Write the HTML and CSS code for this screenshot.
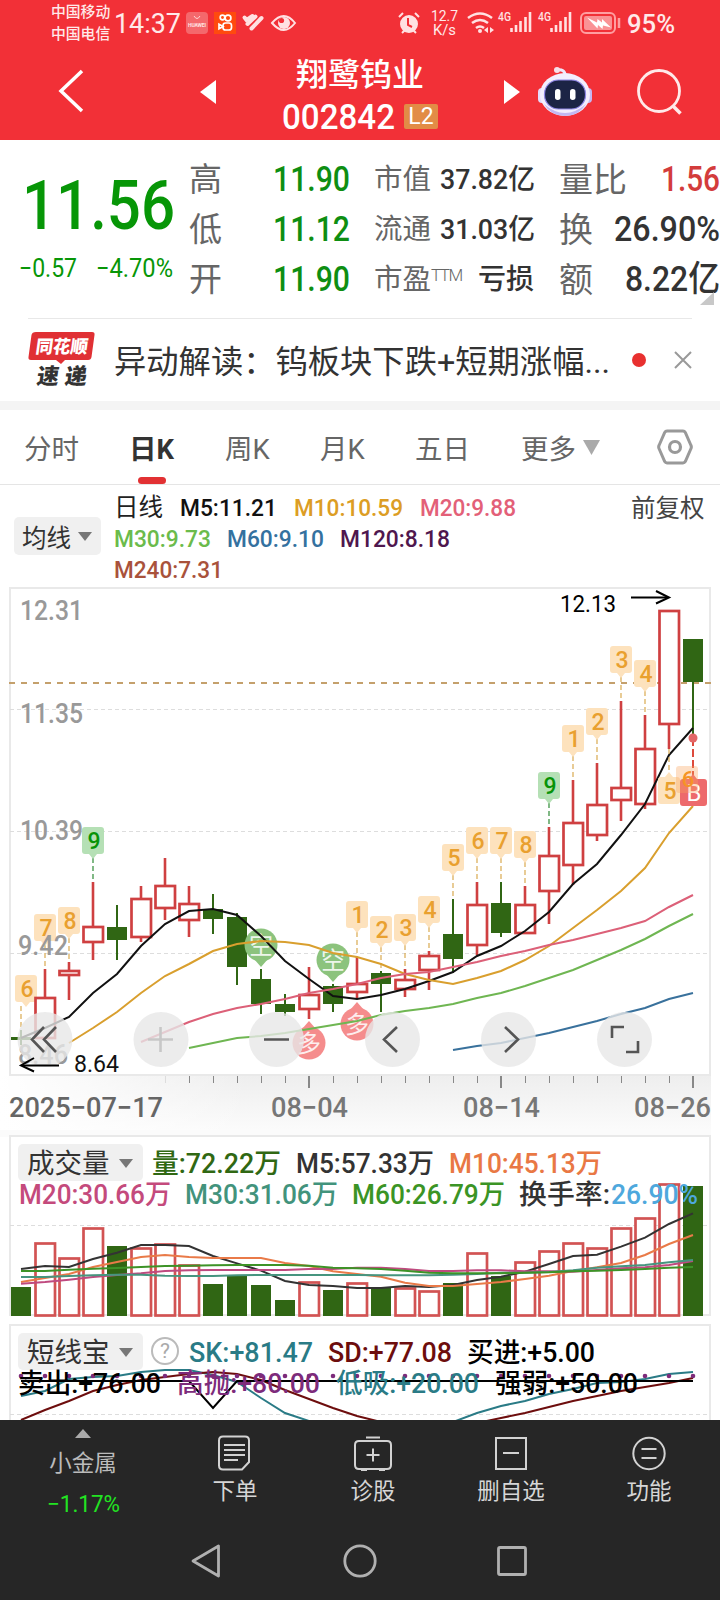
FILE: index.html
```html
<!DOCTYPE html>
<html lang="zh-CN">
<head>
<meta charset="utf-8">
<title>翔鹭钨业 002842</title>
<link rel="stylesheet" href="styles.css">
</head>
<body>
<div class="phone">
  <header class="top">
    <div class="status">
      <div class="carriers"><span>中国移动</span><span>中国电信</span></div>
      <span class="clock" data-w="67">14:37</span>
      <svg class="status-left" width="112" height="24" viewBox="186 11 112 24">
        <rect x="186" y="12" width="22" height="22" rx="4" fill="#f4686c"/>
        <path d="M194 16q3 5 6 0" fill="none" stroke="#ffd5d5"/>
        <text x="188" y="27" font-size="5" font-weight="700" fill="#ffe3e3" textLength="18">HUAWEI</text>
        <rect x="214" y="12" width="22" height="22" fill="#ff4a0e"/>
        <g fill="none" stroke="#fff" stroke-width="1.7"><circle cx="222.500" cy="17.500" r="2.300"/><circle cx="228" cy="18" r="2.900"/><rect x="223" y="23" width="8.500" height="7" rx="2.500"/><path d="M223 26.500l-4-2.200v4.400z"/></g>
        <g stroke="#ffe1e2" stroke-width="4" stroke-linecap="round"><path d="M244.500 17.500l2 2.500 6-4"/><path d="M247.500 24l8-7.500"/><path d="M251.500 28.500l10-10.500"/></g>
        <path d="M272 23q12-14 23 0q-11 14-23 0z" fill="none" stroke="#ffe1e2" stroke-width="2"/>
        <circle cx="284" cy="23" r="6" fill="#ffe1e2"/><circle cx="281.500" cy="20.500" r="2.600" fill="#f23037"/>
      </svg>
      <svg class="status-right" width="225" height="34" viewBox="396 6 225 34">
        <g stroke="#ffe1e2" stroke-width="2" fill="none"><circle cx="409" cy="24" r="8" fill="#ffe1e2"/><path d="M399 17l4-4M419 17l-4-4M402 33l3-3M416 33l-3-3"/><path d="M408 18v7l4 2" stroke="#f23037"/></g>
        <g fill="#ffe9e9" font-size="15"><text x="431" y="20.500" textLength="27" lengthAdjust="spacingAndGlyphs">12.7</text><text x="433" y="34.500" textLength="23" lengthAdjust="spacingAndGlyphs">K/s</text></g>
        <g stroke="#ffe1e2" stroke-width="2.500" fill="none"><path d="M468 18q12-9 24 0"/><path d="M472 23q8-6 16 0"/><path d="M476 28q4-3 8 0"/></g>
        <circle cx="480" cy="31" r="2" fill="#ffe1e2"/><path d="M484 30l4-3v6zM494 30l-4-3v6z" fill="#ffe1e2"/>
        <g fill="#ffe1e2" font-size="12" font-weight="500"><text x="498" y="21" textLength="13" lengthAdjust="spacingAndGlyphs">4G</text><text x="538" y="21" textLength="13" lengthAdjust="spacingAndGlyphs">4G</text></g>
        <g stroke="#ffe1e2" stroke-width="2.600"><path d="M511.500 32v-4M516 32v-7M520.500 32v-11M525.500 32v-15M530 32V12"/><path d="M551.500 32v-4M556 32v-7M560.500 32v-11M565.500 32v-15M570 32V12"/></g>
        <rect x="581" y="13" width="34" height="20" rx="5" fill="none" stroke="#ff9ea1" stroke-width="2"/>
        <rect x="584" y="16" width="28" height="14" rx="2" fill="#fa9295"/><path d="M587 17.500l10 5 .5-3.500 4.500 3.500v-3.500l9 8.500-8-2-.5 3.500-4.500-4-.5 3.500z" fill="#fff"/><path d="M619 18v10" stroke="#ff9ea1" stroke-width="2.500"/>
      </svg>
      <span class="battery" data-w="48">95%</span>
    </div>
    <div class="titlebar">
      <svg class="back" width="26" height="44" viewBox="0 0 26 44"><path d="M24 2L3 22l21 20" fill="none" stroke="#fff" stroke-width="3.500"/></svg>
      <svg class="prev" width="16" height="24"><path d="M16 0v24L0 12z" fill="#fff"/></svg>
      <div class="name">
        <h1>翔鹭钨业</h1>
        <div class="code"><span data-w="113">002842</span><em>L2</em></div>
      </div>
      <svg class="next" width="16" height="24"><path d="M0 0v24l16-12z" fill="#fff"/></svg>
      <svg class="robot" width="54" height="50" viewBox="0 0 54 50">
        <path d="M27 9q0-6-8-5" stroke="#eee8fb" stroke-width="3" fill="none"/><circle cx="19" cy="4" r="3" fill="#f7dfe9"/>
        <rect x="0" y="22" width="8" height="15" rx="4" fill="#e4dafb"/><rect x="46" y="22" width="8" height="15" rx="4" fill="#c6b7f3"/>
        <ellipse cx="27" cy="28.500" rx="25" ry="21.500" fill="#f3eefd"/><path d="M6 38q21 18 42 0q-7 12-21 12T6 38z" fill="#c3b8f2"/>
        <rect x="6.500" y="14" width="41" height="29" rx="14" fill="#1c2445" stroke="#8f86e6" stroke-width="1.200"/>
        <rect x="17" y="23" width="5.500" height="11" rx="2.700" fill="#fff"/><rect x="32" y="23" width="5.500" height="11" rx="2.700" fill="#fff"/>
      </svg>
      <svg class="search" width="46" height="46" viewBox="0 0 46 46"><circle cx="22" cy="22" r="20.500" fill="none" stroke="#ffe9e9" stroke-width="2.800"/><path d="M36 37l7.500 7.500" stroke="#ffe9e9" stroke-width="3.500"/></svg>
    </div>
  </header>

  <section class="quote">
    <div class="price">
      <strong data-w="153">11.56</strong>
      <div class="change"><span data-w="58">−0.57</span><span data-w="77">−4.70%</span></div>
    </div>
    <dl class="ohl">
      <dt>高</dt><dd><span data-w="77">11.90</span></dd>
      <dt>低</dt><dd><span data-w="77">11.12</span></dd>
      <dt>开</dt><dd><span data-w="77">11.90</span></dd>
    </dl>
    <dl class="cap">
      <dt>市值</dt><dd><span data-w="95">37.82亿</span></dd>
      <dt>流通</dt><dd><span data-w="95">31.03亿</span></dd>
      <dt>市盈<sup>TTM</sup></dt><dd>亏损</dd>
    </dl>
    <dl class="vol">
      <dt>量比</dt><dd class="up"><span data-w="59">1.56</span></dd>
      <dt>换</dt><dd><span data-w="106">26.90%</span></dd>
      <dt>额</dt><dd><span data-w="95">8.22亿</span></dd>
    </dl>
    <i class="corner"></i>
  </section>

  <section class="news">
    <svg width="68" height="56" viewBox="0 0 68 56">
      <path d="M8 0h56q3 0 2.500 3l-3 22q-.5 3-3.500 3H37l-4 4-5-4H3q-3 0-2.500-3l3-22Q4 0 8 0z" fill="#e03034"/>
      <g class="logo-text"><text transform="translate(7 21) skewX(-8)" font-size="18" fill="#fff" textLength="52" lengthAdjust="spacingAndGlyphs">同花顺</text><text transform="translate(8 51.500) skewX(-8)" font-size="22" fill="#333" textLength="50">速递</text></g>
    </svg>
    <p><span data-w="496">异动解读：钨板块下跌+短期涨幅...</span></p>
    <i class="dot"></i>
    <svg width="18" height="18"><path d="M1 1l16 16M17 1L1 17" stroke="#999" stroke-width="2"/></svg>
  </section>

  <nav class="tabs">
    <a>分时</a><a class="on">日K</a><a>周K</a><a>月K</a><a>五日</a><a>更多</a>
    <svg class="more" width="17" height="15"><path d="M0 0h17L8.500 15z" fill="#aaa"/></svg>
    <svg class="gear" width="36" height="36" viewBox="0 0 36 36"><path d="M10 2h16q1.500 0 2.300 1.400L34 16.500q.7 1.500 0 3L28.300 32.600Q27.500 34 26 34H10q-1.500 0-2.300-1.400L2 19.500q-.7-1.500 0-3L7.700 3.400Q8.500 2 10 2z" fill="none" stroke="#999" stroke-width="3"/><circle cx="18" cy="18" r="5.500" fill="none" stroke="#999" stroke-width="3.200"/></svg>
  </nav>

  <section class="ma">
    <button class="pill">均线<i></i></button>
    <div class="ma-rows">
      <div><span class="m0" data-w="49">日线</span><span class="m5" data-w="97">M5:11.21</span><span class="m10" data-w="109">M10:10.59</span><span class="m20" data-w="96">M20:9.88</span></div>
      <div><span class="m30" data-w="97">M30:9.73</span><span class="m60" data-w="97">M60:9.10</span><span class="m120" data-w="110">M120:8.18</span></div>
      <div><span class="m240" data-w="109">M240:7.31</span></div>
    </div>
    <span class="adjust">前复权</span>
  </section>

  <svg class="kline" id="kline" width="720" height="544" viewBox="0 586 720 544"></svg>

  <section class="sub volume">
    <svg id="volume" width="720" height="193" viewBox="0 1130 720 193"></svg>
    <div class="legend">
      <div><button class="pill">成交量<i></i></button><span class="v0" data-w="129">量:72.22万</span><span class="v5" data-w="138">M5:57.33万</span><span class="v10" data-w="153">M10:45.13万</span></div>
      <div class="second"><span class="v20" data-w="152">M20:30.66万</span><span class="v30" data-w="153">M30:31.06万</span><span class="v60" data-w="153">M60:26.79万</span><span class="v5" data-w="91">换手率:</span><span class="rate" data-w="87">26.90%</span></div>
    </div>
  </section>

  <section class="sub short">
    <svg id="short" width="720" height="97" viewBox="0 1323 720 97"></svg>
    <div class="legend">
      <div><button class="pill">短线宝<i></i></button><b class="help">?</b><span class="sk" data-w="124">SK:+81.47</span><span class="sd" data-w="124">SD:+77.08</span><span data-w="128">买进:+5.00</span></div>
      <div class="second"><span data-w="143">卖出:+76.00</span><span class="high" data-w="143">高抛:+80.00</span><span class="sk" data-w="143">低吸:+20.00</span><span data-w="143">强弱:+50.00</span></div>
    </div>
  </section>

  <nav class="actions">
    <div class="sector"><svg width="16" height="9"><path d="M8 0l8 9H0z" fill="#aaa"/></svg><span>小金属</span><b data-w="73">−1.17%</b></div>
    <a><svg width="36" height="36" viewBox="0 0 36 36"><path d="M6 1.500h22q4 0 4 4V27l-7 7.500H6q-4 0-4-4v-25q0-4 4-4zM7 10h21M7 15h21M7 20h21M7 25h14"/></svg>下单</a>
    <a><svg width="38" height="36" viewBox="0 0 38 36"><path d="M12 2.500h14M5 6h28q4 0 4 4v20q0 4-4 4H5q-4 0-4-4V10q0-4 4-4zM12.500 20h13M19 13.500v13M7 35.500h6M25 35.500h6"/></svg>诊股</a>
    <a><svg width="32" height="36" viewBox="0 0 32 36"><path d="M1 3h30v31H1zM8 18h16"/></svg>删自选</a>
    <a><svg width="34" height="36" viewBox="0 0 34 36"><circle cx="17" cy="18.500" r="15.700"/><path d="M9.500 14h15M9.500 23h15"/></svg>功能</a>
  </nav>
  <footer class="system">
    <svg width="30" height="34" viewBox="0 0 30 34"><path d="M27.500 2v30L2 17z"/></svg>
    <svg width="34" height="34" viewBox="0 0 34 34"><circle cx="17" cy="17" r="15.200"/></svg>
    <svg width="30" height="34" viewBox="0 0 30 34"><rect x="1.500" y="3.500" width="27" height="27" rx="1.500"/></svg>
  </footer>
</div>
<script src="charts.js"></script>
</body>
</html>
```
FILE: styles.css
```css
* { box-sizing: border-box; margin: 0; padding: 0; }
body { width: 720px; background: #fff; font-family: Roboto, "Noto Sans CJK SC", sans-serif; color: #333; }
svg { display: block; flex: none; }
button { border: 0; font: inherit; color: inherit; }
[data-w] { display: inline-block; white-space: nowrap; transform-origin: 0 50%; flex: none; }
.phone { width: 720px; height: 1600px; overflow: hidden; display: flex; flex-direction: column; }
.phone > * { flex: none; }

.top { height: 140px; background: #f23037; color: #fff; }
.status { height: 46px; padding-left: 51px; display: flex; align-items: center; color: #ffe9e9; }
.carriers { width: 60px; display: flex; flex-direction: column; font-size: 14.800px; line-height: 22px; white-space: nowrap; font-weight: 500; }
.clock { margin-left: 3px; font-size: 28px; line-height: 48px; padding-top: 2px; }
.status-left { margin-left: 5px; }
.status-right { margin-left: 98px; }
.battery { margin-left: 6px; font-size: 25px; padding-top: 2px; font-weight: 500; }
.titlebar { height: 94px; display: flex; align-items: flex-start; }
.back { margin: 23px 0 0 58px; }
.prev { margin: 34px 0 0 116px; }
.name { width: 170px; margin-left: 66px; padding-top: 2px; white-space: nowrap; }
.name h1 { margin-left: 14px; font-size: 32px; font-weight: 500; line-height: 54px; }
.code { display: flex; align-items: center; height: 32px; font-size: 35px; line-height: 32px; font-weight: 500; }
.code em { margin: -3px 0 0 9px; width: 34px; height: 25px; border-radius: 2px; background: #e28c46; font: 400 23px/26px Roboto, sans-serif; text-align: center; }
.next { margin: 34px 0 0 52px; }
.robot { margin: 20px 0 0 18px; }
.search { margin: 23px 0 0 45px; }

.quote { position: relative; height: 178px; display: flex; padding-top: 15px; overflow: hidden; }
.price { width: 189px; color: #079607; }
.price strong { margin: 10px 0 0 22px; font-size: 69px; line-height: 82px; font-weight: 500; display: inline-block; }
.change { display: flex; padding: 4px 0 0 19px; gap: 19px; font-size: 26px; line-height: 34px; }
dl { display: grid; grid-auto-rows: 50px; line-height: 50px; white-space: nowrap; }
dt { color: #666; }
.ohl { width: 185px; grid-template-columns: 84px 77px; font-size: 33px; }
.ohl dd { color: #0e8e12; font-size: 35px; font-weight: 500; }
.cap { width: 185px; grid-template-columns: 65px 96px; font-size: 28.500px; }
.cap dd { text-align: right; font-weight: 500; }
.cap dd:last-child { padding-right: 1px; font-size: 28px; }
.cap sup { font-size: 17px; font-weight: 300; letter-spacing: -1.500px; line-height: 0; vertical-align: 8px; }
.vol { width: 161px; grid-template-columns: 51px 110px; font-size: 34px; }
.vol dd { text-align: right; font-size: 35px; font-weight: 500; }
.vol dd.up { color: #d33c3c; }
.corner { position: absolute; right: 6px; top: 152px; border-left: 14px solid transparent; border-bottom: 13px solid #c8c8c8; }

.news { width: 664px; height: 83px; margin: 0 28px; border-top: 1px solid #e8e8e8; display: flex; align-items: center; }
.news p { margin-left: 18px; width: 502px; font-size: 32px; line-height: 80px; padding-top: 3px; }
.news .dot { margin-left: 17px; width: 14px; height: 14px; border-radius: 50%; background: #e8302f; }
.news svg:last-child { margin-left: 28px; }
.logo-text { font-family: "Noto Sans CJK SC", sans-serif; font-weight: 900; }

.tabs { height: 84px; border-top: 9px solid #f4f4f4; border-bottom: 1px solid #e5e5e5; display: flex; padding-left: 24px; font-size: 27.500px; line-height: 80px; color: #666; white-space: nowrap; }
.tabs a { width: 95px; }
.tabs a:first-child { width: 105px; }
.tabs a.on { width: 96px; color: #333; font-weight: 700; position: relative; }
.tabs a.on::after { content: ""; position: absolute; left: 9px; bottom: 0; width: 28px; height: 7px; border-radius: 4px; background: #e23133; }
.tabs a:nth-child(5) { width: 106px; }
.tabs a:nth-child(6) { width: 62px; }
.tabs .more { margin-top: 30px; }
.tabs .gear { margin: 19px 0 0 57px; }

.ma { height: 101px; display: flex; padding: 7px 15px 0 14px; font-size: 24.500px; }
.pill { display: flex; align-items: center; background: #f0f0f0; border-radius: 5px; white-space: nowrap; color: #333; }
.pill i { border: 7px solid transparent; border-top: 9px solid #777; border-bottom: 0; }
.ma .pill { width: 87px; height: 38px; margin-top: 25px; padding-left: 8px; gap: 7px; }
.ma-rows { margin-left: 13px; width: 516px; line-height: 31px; font-weight: 500; }
.m0 { font-weight: 400; }
.ma-rows div { display: flex; gap: 17px; height: 31px; }
.ma-rows div:nth-child(2) { gap: 16px; }
.adjust { line-height: 34px; white-space: nowrap; color: #444; margin-left: 1px; }
.m0 { color: #222; } .m5 { color: #111; } .m10 { color: #dc9d24; } .m20 { color: #e36078; }
.m30 { color: #6bbb4b; } .m60 { color: #34719f; } .m120 { color: #4f174e; } .m240 { color: #a9523b; }

.sub { position: relative; font-size: 27px; }
.legend { position: absolute; left: 18px; top: 14px; font-weight: 500; }
.legend div { display: flex; gap: 15px; height: 37px; line-height: 40px; }
.legend .second { height: 28px; margin-left: 1px; line-height: 28px; gap: 14px; }
.legend .pill { width: 125px; height: 37px; padding: 3px 0 0 9px; gap: 9px; margin-right: -6px; font-size: 27.500px; font-weight: 400; line-height: 34px; }
.pill i { position: relative; }
.legend .pill i { top: -1px; }
.short .legend { top: 10px; color: #000; }
.short .legend .pill { margin-right: -7px; }
.short .legend .second { gap: 16px; margin-left: 0; }
.help { width: 28px; height: 28px; margin: 4px -5px 0 0; border: 2px solid #bbb; border-radius: 50%; color: #aaa; font-size: 21px; line-height: 25px; font-weight: 400; text-align: center; }
.v0 { color: #306813; } .v5 { color: #333; } .v10 { color: #e97844; } .v20 { color: #c44a7c; } .v30 { color: #42937c; } .v60 { color: #3b9425; } .rate { color: #4ea8dd; margin-left: -13px; }
.sk { color: #2a7b86; } .sd { color: #6d0d0d; } .high { color: #7d2b7b; }

.actions { height: 103px; background: #262626; color: #d6d6d6; font-size: 22.500px; display: flex; padding-left: 14px; }
.actions > * { width: 138px; display: flex; flex-direction: column; align-items: center; white-space: nowrap; }
.actions a { padding-top: 15px; line-height: 41px; }
.actions a svg { fill: none; stroke: #d2d2d2; stroke-width: 2; }
.actions .sector { padding-top: 9px; line-height: 51px; margin-right: 14px; color: #bbb; }
.sector b { color: #22e322; font-size: 23.500px; font-weight: 400; line-height: 30px; }
.system { height: 77px; background: #262626; display: flex; padding: 21px 0 0 191px; }
.system svg { fill: none; stroke: #b0b0b0; stroke-width: 2.800; stroke-linejoin: round; }
.system svg + svg { margin-left: 122px; }
.system svg + svg + svg { margin-left: 120px; }
```
FILE: charts.js
```js
// Squeeze or stretch each figure to its column width
document.querySelectorAll('[data-w]').forEach(function (el) {
  var w = +el.dataset.w, n = el.getBoundingClientRect().width;
  el.style.width = w + 'px';
  el.style.transform = 'scaleX(' + (w / n).toFixed(4) + ')';
  el.style.textAlign = 'left';
});

var RED = '#cf4041', GREEN = '#306614';
function X(i) { return 21 + 24 * i; }
function line(x1, y1, x2, y2, c, w, extra) {
  return '<path d="M' + x1 + ' ' + y1 + 'L' + x2 + ' ' + y2 + '" fill="none" stroke="' + c + '" stroke-width="' + w + '" ' + (extra || '') + '/>';
}
function curve(start, ys, c, w) {
  return '<polyline fill="none" stroke="' + c + '" stroke-width="' + (w || 2) + '" points="' + ys.map(function (y, i) { return X(start + i) + ',' + y; }).join(' ') + '"/>';
}
function label(t, x, y, w, size, c, extra) {
  return '<text x="' + x + '" y="' + y + '" font-size="' + size + '" fill="' + c + '" textLength="' + w + '" lengthAdjust="spacingAndGlyphs" ' + (extra || '') + '>' + t + '</text>';
}
function frame(y, h) { return '<rect x="10" y="' + y + '" width="700" height="' + h + '" fill="none" stroke="#e9e9e9" stroke-width="2"/>'; }
function grid(y) { return line(10, y, 710, y, '#ddd', 1.2, 'stroke-dasharray="4 3"'); }

// wick top, wick bottom, body top, body bottom, rising
var K = [
  [1030,1045,1037,1040,0],[969,1039,997,1039,1],[962,1000,970,976,1],[882,960,926,943,1],[905,960,927,940,0],
  [886,942,898,938,1],[858,920,885,909,1],[886,937,903,921,1],[894,934,909,919,0],[913,985,917,967,0],
  [969,1014,979,1004,0],[994,1016,1004,1012,0],[967,1019,994,1010,1],[984,1012,986,1004,0],[957,998,983,993,1],
  [971,1012,973,984,0],[969,997,979,990,1],[951,990,955,971,1],[899,973,934,959,0],[882,955,904,946,1],
  [882,937,903,933,0],[886,934,904,934,1],[827,924,855,892,1],[780,885,822,866,1],[763,841,804,836,1],
  [701,821,787,801,1],[715,809,748,805,1],[610,749,610,725,1],[639,738,639,682,0]
];
var s = '<defs><linearGradient id="fade" x2="0" y2="1"><stop stop-color="#eeeeee"/><stop offset="1" stop-color="#fbfbfb"/></linearGradient><linearGradient id="fadex"><stop stop-color="#fff"/><stop offset="1" stop-color="#fff" stop-opacity="0"/></linearGradient></defs>';
s += '<rect x="0" y="1076" width="711" height="54" fill="url(#fade)"/><rect x="0" y="1076" width="250" height="54" fill="url(#fadex)"/>';
s += frame(588, 487) + grid(709.5) + grid(831.5) + grid(953.5);
s += line(9, 683, 711, 683, '#c4a06c', 2, 'stroke-dasharray="6 6"');

function badge(i, y, t, green, wick) {
  var x = X(i), bx = i === 0 ? 15 : x - 11, c = green ? '#079307' : '#e9a02f';
  return line(x, y + 31, x, wick, green ? '#2d8a35' : '#d9aa50', 1.2, 'stroke-dasharray="5 3"') +
    '<path d="M' + (bx + 3) + ' ' + y + 'h16q3 0 3 3v21q0 3-3 3h-4l-4 5-4-5h-4q-3 0-3-3v-21q0-3 3-3z" fill="' + (green ? '#b5e0b5' : '#fde2bd') + '"/>' +
    '<text x="' + (bx + 12) + '" y="' + (y + 22) + '" text-anchor="middle" font-size="23" font-weight="500" fill="' + c + '">' + t + '</text>';
}
[[0,975,6],[1,914,7],[2,907,8],[3,827,9,1],[14,901,1],[15,916,2],[16,914,3],[17,896,4],[18,844,5],[19,827,6],[20,827,7],[21,831,8],[22,772,9,1],[23,725,1],[24,708,2],[25,646,3],[26,660,4]].forEach(function (b) {
  s += badge(b[0], b[1], b[2], b[3], K[b[0]][0]);
});
[['12.31',20,620],['11.35',20,723],['10.39',20,839.5],['9.42',18,954.5],['8.46',18,1064]].forEach(function (l) {
  s += label(l[0], l[1], l[2], l[0].length > 4 ? 63 : 50, 27.5, '#999', 'font-weight="500"');
});
K.forEach(function (k, i) {
  var x = X(i), c = k[4] ? RED : GREEN;
  s += line(x, k[0], x, k[1], c, k[4] ? 2.6 : 2);
  s += k[4] ? '<rect x="' + (x - 9.5) + '" y="' + (k[2] + 1) + '" width="19.500" height="' + (k[3] - k[2] - 2) + '" fill="#fff" stroke="' + c + '" stroke-width="2.700"/>'
            : '<rect x="' + (x - 10) + '" y="' + k[2] + '" width="20" height="' + (k[3] - k[2]) + '" fill="' + c + '"/>';
});
function pin(x, y, t, c, down) {
  return '<g fill="' + c + '"><circle cx="' + x + '" cy="' + y + '" r="16.500"/><path d="' + (down ? 'M' + (x - 7) + ' ' + (y + 14) + 'h14l-7 8z' : 'M' + (x - 7) + ' ' + (y - 14) + 'h14l-7-8z') + '"/></g>' +
    '<text x="' + x + '" y="' + (y + 9) + '" text-anchor="middle" font-size="24" fill="#fff" opacity=".85">' + t + '</text>';
}
s += pin(261, 945, '空', '#8cc37d', 1) + pin(333, 960, '空', '#8cc37d', 1) + pin(309, 1043, '多', '#f58c8c') + pin(357, 1024, '多', '#f58c8c');
s += curve(0, [1038,1028,1017,993,974,946,924,911,909,915,936,961,979,996,999,995,989,981,972,956,946,931,912,884,864,835,804,755,728], '#111');
s += curve(2, [1043,1028,1012,993,976,964,951,944,941,942,945,953,957,964,974,980,984,978,971,960,946,928,910,891,868,833,806], '#d99f2e');
s += curve(5, [1042,1032,1022,1014,1008,1004,999,993,989,984,978,974,972,967,962,956,951,945,940,934,928,921,907,895], '#dc6078');
s += curve(7, [1048,1043,1038,1036,1033,1029,1025,1021,1015,1011,1008,1004,998,993,986,978,970,960,950,939,926,914], '#6fb652');
s += curve(18, [1050,1046,1043,1038,1033,1027,1021,1014,1008,999,993], '#39719c');

// latest bars: setup counts and the buy marker
s += line(669, 749, 669, 773, '#d9aa50', 1.2, 'stroke-dasharray="5 3"') + '<path d="M661 777h4l4-5 4 5h4q3 0 3 3v21q0 3-3 3h-16q-3 0-3-3v-21q0-3 3-3z" fill="#fde2bd"/><text x="670" y="799" text-anchor="middle" font-size="23" font-weight="500" fill="#e9a02f">5</text>';
s += line(693, 738, 693, 776, '#dd4a3c', 2, 'stroke-dasharray="8 3"') + '<circle cx="693" cy="738" r="4.5" fill="#e36767"/>';
s += '<path d="M683 779h6l4-5 4 5h7q3 0 3 3v21q0 3-3 3h-21q-3 0-3-3v-21q0-3 3-3z" fill="#ed6a6c"/><text x="694" y="801" text-anchor="middle" font-size="24" fill="#fff">B</text>';
s += '<rect x="676" y="766" width="22" height="27" rx="3" fill="#f9a45b" opacity=".35"/><text x="688" y="787" text-anchor="middle" font-size="22" font-weight="500" fill="#f59425">6</text>';
s += label('12.13', 560, 612, 56, 24, '#000') + line(631, 597.5, 668, 597.5, '#000', 2) + '<path d="M656 591l13 6.500-13 6" fill="none" stroke="#000" stroke-width="2"/>';

// floating chart controls
[45, 161, 276.5, 392.5, 508.5, 624.5].forEach(function (x) { s += '<circle cx="' + x + '" cy="1039.500" r="27.500" fill="#e7e7e7" fill-opacity=".8"/>'; });
s += '<g fill="none" stroke="#555" stroke-width="2.6"><path d="M44 1027l-12 12.500 12 12.500M56 1027l-12 12.500 12 12.500M264 1039.500h25M397 1027l-13 12.500 13 12.500M505 1027l13 12.500-13 12.500M612 1038v-11h12M638 1041v11h-12"/><path d="M148 1039.500h25M160.500 1027v25" stroke="#c7c7c7"/></g>';
s += line(22, 1065.5, 59, 1065.5, '#000', 2) + '<path d="M34 1058l-13 7.500 13 6" fill="none" stroke="#000" stroke-width="2"/>' + label('8.64', 74, 1072, 45, 24, '#111');
for (var i = 6; i < 29; i++) {
  var big = i === 12 || i === 20 || i === 28;
  s += line(X(i) + (big ? 0 : .5), 1076, X(i) + (big ? 0 : .5), big ? 1088 : 1083, i === 6 ? '#ddd' : '#888', big ? 2 : 1);
}
s += label('2025−07−17', 9, 1117, 154, 27.5, '#666', 'font-weight="500"') + label('08−04', 271, 1117, 77, 27.5, '#777', 'font-weight="500"') + label('08−14', 463, 1117, 77, 27.5, '#777', 'font-weight="500"') + label('08−26', 634, 1117, 77, 27.5, '#777', 'font-weight="500"');
document.getElementById('kline').innerHTML = s;

// volume bars and their averages
var V = [1287,1243,1258,1228,1246,1248,1244,1265,1284,1276,1285,1300,1282,1290,1283,1288,1288,1291,1283,1253,1276,1262,1251,1243,1248,1228,1218,1184,1186];
var v = '<rect x="0" y="1130" width="711" height="7" fill="#fbfbfb"/>' + frame(1136, 179) + grid(1225.5);
V.forEach(function (y, i) {
  var x = X(i);
  v += K[i][4] ? '<rect x="' + (x - 9.5) + '" y="' + (y + .5) + '" width="19.500" height="' + (1315 - y) + '" fill="#fff" stroke="#d25353" stroke-width="2.700"/>'
               : '<rect x="' + (x - 10) + '" y="' + y + '" width="20" height="' + (1316 - y) + '" fill="' + GREEN + '"/>';
});
function third(a) { return a.map(function (y) { return 1130 + y / 3; }); }
v += curve(0, third([417,408,411,387,368,345,345,348,378,400,422,453,465,468,474,474,468,471,465,450,440,425,402,378,374,350,323,282,250]), '#333');
v += curve(0, third([456,444,432,411,396,381,375,381,384,384,384,399,408,424,432,440,458,468,468,462,456,447,437,423,412,399,375,342,315]), '#e97a48');
v += curve(0, third([461,456,449,441,435,430,423,421,420,420,420,420,417,417,413,413,417,423,423,421,421,424,424,425,420,415,412,405,393]), '#bf4a7f');
v += curve(0, third([441,441,438,436,434,434,437,438,438,436,435,435,435,435,435,436,436,436,434,432,428,428,426,421,413,409,405,397,390]), '#46957f');
v += curve(0, third([423,423,419,416,414,411,408,407,406,405,405,405,407,413,415,417,422,428,430,430,430,428,427,424,422,420,417,413,411]), '#3d9327');
document.getElementById('volume').innerHTML = v;

// short-term oscillator
var o = frame(1325, 110) + grid(1414.5);
o += curve(0, [1396,1391,1379,1377,1376,1372,1370,1370,1375,1382,1398,1413,1421,1428,1434,1438,1436,1430,1422,1413,1406,1401,1394,1389,1383,1382,1379,1374,1372], '#2a7b86');
o += curve(0, [1420,1410,1401,1391,1385,1380,1377,1374,1372,1374,1380,1390,1399,1408,1416,1422,1427,1430,1427,1423,1418,1413,1407,1401,1396,1391,1387,1383,1378], '#6d0d0d');
o += '<path d="M21 1381H189L213 1408L237 1381H693" fill="none" stroke="#000" stroke-width="2"/>';
for (var j = 0; j < 29; j++) o += '<circle cx="' + X(j) + '" cy="1376" r="2.300" fill="#7d2b7b"/>';
document.getElementById('short').innerHTML = o;
```
